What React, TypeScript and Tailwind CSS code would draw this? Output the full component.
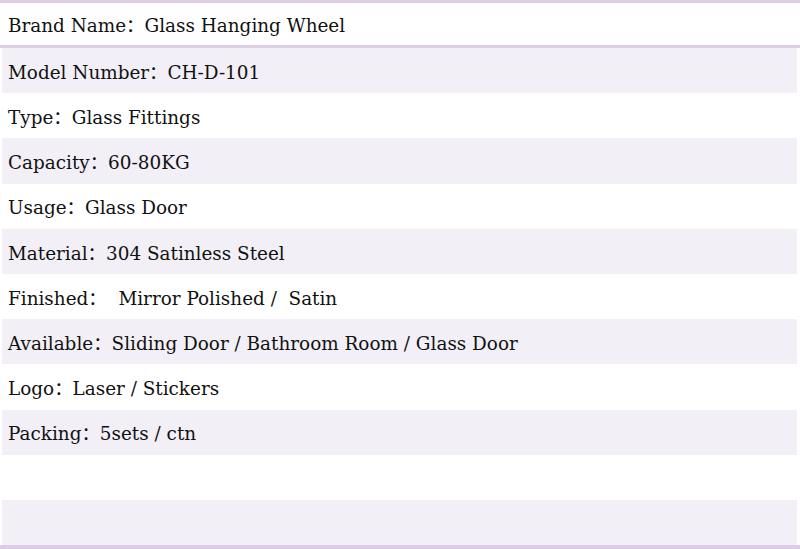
const rows = [
  'Model Number：CH-D-101',
  'Type：Glass Fittings',
  'Capacity：60-80KG',
  'Usage：Glass Door',
  'Material：304 Satinless Steel',
  'Finished：  Mirror Polished /  Satin',
  'Available：Sliding Door / Bathroom Room / Glass Door',
  'Logo：Laser / Stickers',
  'Packing：5sets / ctn',
  '',
  '',
];

export default function App() {
  return (
    <div
      className="w-[800px] h-[549px] bg-white text-[#111] text-[18.4px] overflow-hidden border-t-[3px] border-b-4 border-[#dccde9] flex flex-col"
      style={{ fontFamily: '"DejaVu Serif", "Noto Sans CJK SC", serif' }}
    >
      <div className="h-[45px] shrink-0 flex items-center px-2 pt-1 border-b-[3px] border-[#dccde9] whitespace-pre">
        Brand Name：Glass Hanging Wheel
      </div>
      {rows.map((text, i) => (
        <div
          key={i}
          className={`h-[45.2px] shrink-0 flex items-center pt-1 whitespace-pre ${
            i % 2 === 0 ? 'bg-[#f2eff7] ml-[2px] mr-[3px] pl-[6px]' : 'bg-white px-2'
          }`}
        >
          {text}
        </div>
      ))}
    </div>
  );
}
